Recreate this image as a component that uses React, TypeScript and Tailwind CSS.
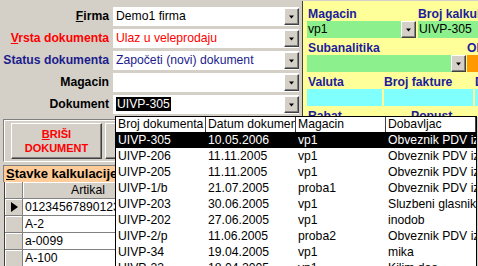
import React from "react";

const Tri = () => (
  <svg width="7" height="4" viewBox="0 0 7 4" className="block">
    <path d="M1 0.5H6L3.5 3.5Z" fill="#000" />
  </svg>
);

const DropBtn = () => (
  <div className="shrink-0 w-[15px] h-[17px] bg-[#d4d0c8] border border-t-white border-l-white border-r-[#404040] border-b-[#404040] shadow-[inset_-1px_-1px_0_#808080] flex items-center justify-center">
    <Tri />
  </div>
);

type Row = {
  label: React.ReactNode;
  lc: string;
  value: React.ReactNode;
  vc: string;
};

const leftRows: Row[] = [
  {
    label: (
      <>
        <span className="underline">F</span>irma
      </>
    ),
    lc: "text-black",
    value: "Demo1 firma",
    vc: "text-black",
  },
  {
    label: (
      <>
        <span className="underline">V</span>rsta dokumenta
      </>
    ),
    lc: "text-[#ff0000]",
    value: "Ulaz u veleprodaju",
    vc: "text-[#ff0000]",
  },
  {
    label: "Status dokumenta",
    lc: "text-[#1c1c8c]",
    value: "Započeti (novi) dokument",
    vc: "text-[#1c1c8c]",
  },
  { label: "Magacin", lc: "text-black", value: "", vc: "text-black" },
  {
    label: "Dokument",
    lc: "text-black",
    value: <span className="bg-black text-white px-[1px]">UIVP-305</span>,
    vc: "text-black",
  },
];

const listRows = [
  ["UIVP-305", "10.05.2006", "vp1", "Obveznik PDV iz RS"],
  ["UIVP-206", "11.11.2005", "vp1", "Obveznik PDV iz RS"],
  ["UIVP-205", "11.11.2005", "vp1", "Obveznik PDV iz RS"],
  ["UIVP-1/b", "21.07.2005", "proba1", "Obveznik PDV iz RS"],
  ["UIVP-203", "30.06.2005", "vp1", "Sluzbeni glasnik"],
  ["UIVP-202", "27.06.2005", "vp1", "inodob"],
  ["UIVP-2/p", "11.06.2005", "proba2", "Obveznik PDV iz RS"],
  ["UIVP-34", "19.04.2005", "vp1", "mika"],
  ["UIVP-33", "18.04.2005", "vp1", "Kilim doo"],
];

const gridRows = ["01234567890123456789", "A-2", "a-0099", "A-100"];

export default function App() {
  return (
    <div className="relative w-[478px] h-[266px] overflow-hidden bg-[#d4d0c8] font-['Liberation_Sans',Arial,sans-serif] text-black">
      {/* top section */}
      <div className="flex h-[117px]">
        <div className="w-[302px] shrink-0 pt-[7px] flex flex-col gap-[3px]">
          {leftRows.map((r, i) => (
            <div key={i} className="flex items-center h-[19px]">
              <div className={`w-[109px] text-right font-bold text-[12.2px] leading-[19px] whitespace-nowrap ${r.lc}`}>
                {r.label}
              </div>
              <div className="ml-[4px] w-[186px] h-full bg-white flex items-center">
                <div className={`flex-1 pl-[3px] text-[12.2px] leading-[15px] whitespace-nowrap overflow-hidden ${r.vc}`}>
                  {r.value}
                </div>
                <DropBtn />
              </div>
            </div>
          ))}
        </div>

        <div className="flex-1 mt-[1px] h-[116px] bg-[#ffff99] border-l border-[#404040] overflow-hidden pl-[4px] text-[12.2px] whitespace-nowrap">
          {/* row 1 */}
          <div className="flex h-[14px] mt-[6px] leading-[14px] font-bold text-[#1c1c9c]">
            <div className="w-[111px] pl-[1px] shrink-0">Magacin</div>
            <div>Broj kalkulacije</div>
          </div>
          <div className="flex h-[17px] items-center">
            <div className="w-[94px] h-full bg-[#8cf08c] pl-[1px] leading-[17px] shrink-0">vp1</div>
            <DropBtn />
            <div className="ml-[2px] flex-1 h-full bg-[#8cf08c] pl-[1px] leading-[17px]">UIVP-305</div>
          </div>
          {/* row 2 */}
          <div className="flex h-[14px] mt-[3px] leading-[14px] font-bold text-[#1c1c9c]">
            <div className="w-[160px] pl-[1px] shrink-0">Subanalitika</div>
            <div>Obračun</div>
          </div>
          <div className="flex h-[17px] items-center">
            <div className="w-[144px] h-full bg-[#8cf08c] shrink-0" />
            <DropBtn />
            <div className="ml-[1px] flex-1 h-full bg-[#ff9900]" />
          </div>
          {/* row 3 */}
          <div className="flex h-[14px] mt-[3px] leading-[14px] font-bold text-[#1c1c9c]">
            <div className="w-[77px] pl-[1px] shrink-0">Valuta</div>
            <div className="w-[91px] shrink-0">Broj fakture</div>
            <div>Datum</div>
          </div>
          <div className="flex h-[17px]">
            <div className="w-[75px] h-full bg-[#80ffff] shrink-0" />
            <div className="ml-[2px] w-[89px] h-full bg-[#80ffff] shrink-0" />
            <div className="ml-[2px] flex-1 h-full bg-[#80ffff]" />
          </div>
          {/* row 4 */}
          <div className="flex h-[14px] mt-[3px] leading-[14px] font-bold text-[#1c1c9c]">
            <div className="w-[104px] pl-[1px] shrink-0">Rabat</div>
            <div>Popust</div>
          </div>
        </div>
      </div>

      {/* bottom section */}
      <div className="pl-[3px] pt-[2px]">
        <div className="w-[400px] h-[43px] border border-t-[#808080] border-l-[#808080] border-r-white border-b-white shadow-[inset_1px_1px_0_#ffffff] pl-[7px] pt-[3px] flex gap-[3px]">
          <div className="w-[91px] h-[36px] bg-[#d4d0c8] border border-t-white border-l-white border-r-[#404040] border-b-[#404040] shadow-[inset_-1px_-1px_0_#808080] flex flex-col items-center justify-center text-[#ff0000] font-bold text-[11px] leading-[14px]">
            <div>
              <span className="underline">B</span>RIŠI
            </div>
            <div>DOKUMENT</div>
          </div>
          <div className="w-[91px] h-[36px] bg-[#d4d0c8] border border-t-white border-l-white border-r-[#404040] border-b-[#404040] shadow-[inset_-1px_-1px_0_#808080]" />
        </div>

        <div className="mt-[3px] w-[400px] h-[17px] bg-[#ffcc99] border-t border-l border-[#808080] pl-[2px] font-bold text-[13px] leading-[16px] whitespace-nowrap">
          <span className="underline">S</span>tavke kalkulacije
        </div>

        <div className="ml-[1px] w-[400px] border-l border-[#404040] text-[12.2px]">
          <div className="flex h-[17px] border-b border-[#808080]">
            <div className="w-[18px] bg-[#d4d0c8] border-r border-[#808080] shadow-[inset_1px_1px_0_#ffffff]" />
            <div className="flex-1 bg-[#d4d0c8] shadow-[inset_1px_1px_0_#ffffff] pl-[48px] leading-[16px]">Artikal</div>
          </div>
          {gridRows.map((g, i) => (
            <div key={i} className="flex h-[17px] border-b border-[#808080]">
              <div className="w-[18px] bg-[#d4d0c8] border-r border-[#808080] shadow-[inset_1px_1px_0_#ffffff] flex items-center justify-center">
                {i === 0 && (
                  <svg width="7" height="10" viewBox="0 0 7 10" className="block ml-[2px]">
                    <path d="M0 0L7 5L0 10Z" fill="#000" />
                  </svg>
                )}
              </div>
              <div className="flex-1 bg-white pl-[2px] leading-[16px] whitespace-nowrap overflow-hidden">{g}</div>
            </div>
          ))}
        </div>
      </div>

      {/* dropdown list */}
      <div className="absolute left-[115px] top-[116px] w-[362px] h-[160px] bg-white border border-black overflow-hidden text-[12.2px] whitespace-nowrap">
        <div className="flex h-[15px] leading-[15px]">
          {["Broj dokumenta", "Datum dokumenta", "Magacin", "Dobavljac"].map((h, i) => (
            <div key={i} className="w-[90px] shrink-0 pl-[2px] border-r border-[#404040] overflow-hidden">
              {h}
            </div>
          ))}
        </div>
        {listRows.map((r, i) => (
          <div key={i} className={`flex h-[16px] leading-[16px] ${i === 0 ? "bg-black text-white" : ""}`}>
            {r.map((c, j) => (
              <div key={j} className="w-[90px] shrink-0 pl-[2px] overflow-hidden">
                {c}
              </div>
            ))}
          </div>
        ))}
      </div>
    </div>
  );
}
